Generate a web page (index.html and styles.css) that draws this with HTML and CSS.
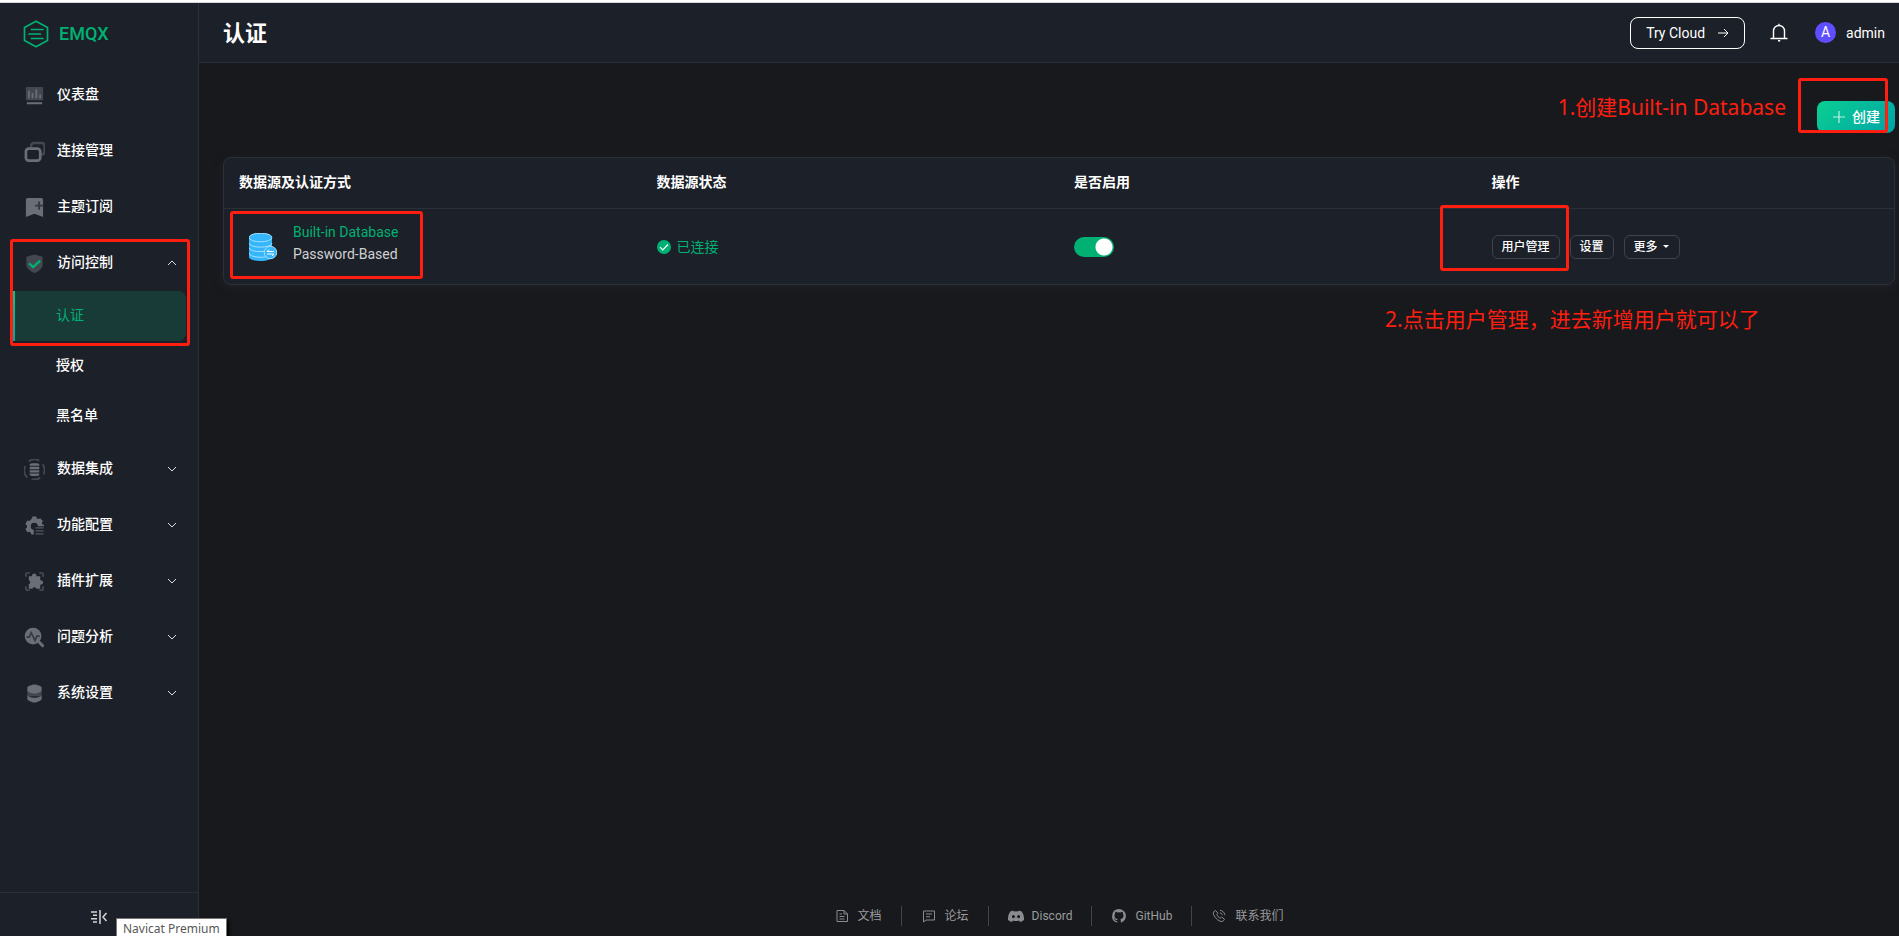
FILE: index.html
```html
<!DOCTYPE html>
<html lang="zh-CN">
<head>
<meta charset="utf-8">
<title>EMQX Dashboard - 认证</title>
<link rel="stylesheet" href="styles.css">
</head>
<body>
<div class="browser-edge"></div>
<div class="app">
  <aside class="sidebar">
    <a class="logo" href="#">
      <svg width="26" height="28" viewBox="0 0 26 28" fill="none" stroke="currentColor" stroke-width="1.7" stroke-linejoin="round"><path d="M13 1.2 24.5 7.4V20.600L13 26.800 1.500 20.600V7.400Z"/><path d="M8.500 9.500H20M6 14H17.500M8.500 18.500H20" stroke-linecap="round"/></svg>
      <span>EMQX</span>
    </a>
    <nav class="menu">
      <a class="item" href="#">
        <svg class="ico" viewBox="0 0 22 22"><path class="dim" d="M3 2h16a1 1 0 0 1 1 1v12a1 1 0 0 1-1 1H3a1 1 0 0 1-1-1V3a1 1 0 0 1 1-1Z"/><path class="lit" d="M4.300 6h1.800v8H4.300zM8 8.500h1.800V14H8zM12 4.500h1.800V14H12zM16 10h1.800v4H16zM3 18h16v2.200H3z"/></svg>
        <span>仪表盘</span></a>
      <a class="item" href="#">
        <svg class="ico" viewBox="0 0 22 22"><rect class="dim-line" x="7.500" y="2" width="14" height="12" rx="3" stroke-width="2.600"/><rect class="lit-line cut" x="2" y="8" width="15" height="12.500" rx="3" stroke-width="2.800"/></svg>
        <span>连接管理</span></a>
      <a class="item" href="#">
        <svg class="ico" viewBox="0 0 22 22"><path class="lit" d="M4 1h14a2 2 0 0 1 2 2v18l-9-3.500L2 21V3a2 2 0 0 1 2-2Z"/><path d="M11.500 9H20M15.800 4.700v8.600" stroke="#343942" stroke-width="2"/></svg>
        <span>主题订阅</span></a>
      <a class="item" href="#">
        <svg class="ico" viewBox="0 0 22 22"><path class="dim" d="M11 1.500 19.500 4v8c0 4.500-4.500 7.300-8.500 9-4-1.700-8.500-4.500-8.500-9V4Z"/><path d="m5.500 10.800 4 4L17 8" fill="none" stroke="#00b173" stroke-width="2.400"/></svg>
        <span>访问控制</span>
        <svg class="arrow" viewBox="0 0 10 10"><path d="m1 7 4-4 4 4"/></svg></a>
      <div class="submenu">
        <a class="sub active" href="#">认证</a>
        <a class="sub" href="#">授权</a>
        <a class="sub" href="#">黑名单</a>
      </div>
      <a class="item" href="#">
        <svg class="ico" viewBox="0 0 22 22"><path class="dim-line" stroke-width="2" d="M3.500 19.500A10 10 0 0 1 1.500 7.500M5 2.500a10 10 0 0 1 11-.8M19.500 5.500A10 10 0 0 1 20.500 16M17 19.500a10 10 0 0 1-9 1.500"/><path class="lit" d="M6 5.500C6 4 16 4 16 5.500V7.200H6zM6 8.200h10v2.500H6zM6 11.700h10v2.500H6zM6 15.200h10v1.500c0 1.500-10 1.500-10 0z"/></svg>
        <span>数据集成</span>
        <svg class="arrow" viewBox="0 0 10 10"><path d="m1 3 4 4 4-4"/></svg></a>
      <a class="item" href="#">
        <svg class="ico" viewBox="0 0 22 22"><path class="lit" d="m8.500 3.500.3-2h4l.7 2.200 1.300.6 2.200-1 2.800 2.900-1.100 2 .5 1.600 1.800.6v1.400h-6.500a3.700 3.700 0 1 0-4.300 3.700V20.500H7.700L7.200 18.500l-1.700-1-2.200.5-1.800-3.500 1.600-1.500v-1.800L1.500 9.500l1.800-3.800 2.400.6Z"/><path class="dim" d="M12 12.700h8.500v1.800H12zM12 15.800h8.500v1.800H12zM12 18.900h8.500v1.800H12z"/></svg>
        <span>功能配置</span>
        <svg class="arrow" viewBox="0 0 10 10"><path d="m1 3 4 4 4-4"/></svg></a>
      <a class="item" href="#">
        <svg class="ico" viewBox="0 0 22 22"><path class="dim-line" stroke-width="2" d="M2 6V4a2 2 0 0 1 2-2h2M16 2h2a2 2 0 0 1 2 2v2M20 16v2a2 2 0 0 1-2 2h-2M6 20H4a2 2 0 0 1-2-2v-2"/><path class="lit" d="M5 5.500h3.500a2.300 2.300 0 1 1 4.400 0H17v4.300a2.300 2.300 0 1 1 0 4.400V18.500h-4a2.200 2.200 0 0 0-4.200 0H5v-4.500a2.200 2.200 0 0 0 0-4.200Z"/></svg>
        <span>插件扩展</span>
        <svg class="arrow" viewBox="0 0 10 10"><path d="m1 3 4 4 4-4"/></svg></a>
      <a class="item" href="#">
        <svg class="ico" viewBox="0 0 22 22"><circle class="lit" cx="9.500" cy="9.500" r="8.800"/><path class="lit-line" stroke-width="3" stroke-linecap="round" d="m15.500 15.500 4 4"/><path d="M2.500 10.500h3l2-4.500 4 8 2-4.500h3" fill="none" stroke="#353a43" stroke-width="1.800"/></svg>
        <span>问题分析</span>
        <svg class="arrow" viewBox="0 0 10 10"><path d="m1 3 4 4 4-4"/></svg></a>
      <a class="item" href="#">
        <svg class="ico" viewBox="0 0 22 22"><path class="dim" d="M3.500 8h15v6h-15z"/><path class="lit" d="M3.500 4.500c0-1 5-3 7.500-3s7.500 2 7.500 3V8c0 1-5 3-7.500 3S3.500 9 3.500 8zM3.500 13c2 1.500 5 2.500 7.500 2.500s5.500-1 7.500-2.500V17c0 1-5 3.500-7.500 3.500S3.500 18 3.500 17z"/></svg>
        <span>系统设置</span>
        <svg class="arrow" viewBox="0 0 10 10"><path d="m1 3 4 4 4-4"/></svg></a>
    </nav>
    <button class="collapse" aria-label="收起菜单">
      <svg width="18" height="14" viewBox="0 0 18 14" fill="none" stroke="#d5d6d8" stroke-width="1.500"><path d="M1 2h6M3 5.300h4M1 8.700h6M3 12h4M10 0v14M16.500 3 13 7l3.500 4"/></svg>
    </button>
  </aside>

  <div class="main">
    <header class="topbar">
      <h1>认证</h1>
      <div class="tools">
        <button class="cloud">Try Cloud
          <svg width="12" height="12" viewBox="0 0 12 12" fill="none" stroke="currentColor"><path d="M1 6h10M7 2l4 4-4 4"/></svg></button>
        <button class="bell" aria-label="通知">
          <svg width="18" height="20" viewBox="0 0 18 20" fill="none" stroke="#fff" stroke-width="1.400"><path d="M3.500 15.500V8a5.500 5.500 0 0 1 11 0v7.500M.5 15.500h17M9 .8v2M8 17.800h2.200"/></svg></button>
        <button class="user"><span class="avatar">A</span>admin</button>
      </div>
    </header>

    <main class="content">
      <div class="actions">
        <button class="create"><svg width="12" height="12" viewBox="0 0 12 12" stroke="#b9f2df" stroke-width="1.200"><path d="M6 0v12M0 6h12"/></svg>创建</button>
      </div>
      <div class="card">
        <table>
          <thead><tr><th>数据源及认证方式</th><th>数据源状态</th><th>是否启用</th><th>操作</th></tr></thead>
          <tbody><tr>
            <td><div class="source">
              <svg width="28" height="28" viewBox="0 0 28 28"><path d="M0 4v20c0 2.200 5 4 11.500 4S23 26.200 23 24V4Z" fill="#35b6fa"/><ellipse cx="11.500" cy="4.300" rx="11.500" ry="4.300" fill="#35b6fa"/><path d="M0 4.300c0 6 23 6 23 0M0 10c0 5.500 23 5.500 23 0M0 14.500c0 5.500 23 5.500 23 0M0 20c0 4.500 15 5 18 3.500M.3 4c1-5 21.500-5 22.400 0" fill="none" stroke="#a5dfff"/><circle cx="21.500" cy="19.500" r="6.200" fill="#35b6fa" stroke="#a5dfff"/><path d="M25 18.500h-7l2-2M18 21h7l-2 2" fill="none" stroke="#fff"/></svg>
              <div class="names"><a href="#">Built-in Database</a><span>Password-Based</span></div>
            </div></td>
            <td><span class="status"><svg width="14" height="14" viewBox="0 0 14 14"><circle cx="7" cy="7" r="7" fill="#00b173"/><path d="m3 7.200 2.800 2.800L11 4.500" fill="none" stroke="#fff" stroke-width="1.200"/></svg>已连接</span></td>
            <td><input class="switch" type="checkbox" role="switch" aria-label="是否启用" checked></td>
            <td><div class="ops"><button>用户管理</button><button>设置</button><button>更多<i class="caret"></i></button></div></td>
          </tr></tbody>
        </table>
      </div>
    </main>

    <footer class="links">
      <a href="#"><svg viewBox="0 0 16 16"><path d="M3 2.500h7l3.500 3.500v7.500H3zM10 2.500V6h3.500M5.500 6H8M5.500 8.500h5M5.500 11h5"/></svg>文档</a>
      <a href="#"><svg viewBox="0 0 16 16"><path d="M2.500 3h11v9H5l-2.500 2zM5 6h6M5 8.800h4"/></svg>论坛</a>
      <a href="#"><svg class="solid" viewBox="0 0 16 16"><path fill-rule="evenodd" d="M5.300 2.500a12 12 0 0 0-3 1C.5 6-.1 8.700 0 12c1.300 1 2.600 1.500 3.900 1.900l1-1.500a9 9 0 0 0 6.200 0l1 1.500c1.400-.4 2.700-1 3.900-1.900.2-3.400-.6-6.200-2.300-8.500a12 12 0 0 0-3-1l-.5 1a11 11 0 0 0-4.500 0ZM5.400 7a1.500 1.600 0 1 1 0 3.200 1.500 1.600 0 0 1 0-3.200Zm5.200 0a1.500 1.600 0 1 1 0 3.200 1.500 1.600 0 0 1 0-3.200Z"/></svg>Discord</a>
      <a href="#"><svg class="solid" viewBox="0 0 16 16"><path d="M8 1a7 7 0 0 0-2.200 13.600c.4 0 .5-.2.500-.4v-1.300c-2 .4-2.400-.9-2.400-.9-.3-.8-.8-1-.8-1-.6-.4 0-.4 0-.4.800 0 1.100.700 1.100.700.6 1.100 1.700.8 2.100.6 0-.4.2-.7.400-.9-1.600-.2-3.200-.8-3.200-3.500 0-.8.300-1.400.7-1.900 0-.2-.3-.9.100-1.800 0 0 .6-.2 1.900.700a6.600 6.600 0 0 1 3.600 0c1.300-.9 1.900-.7 1.900-.7.4.9.100 1.600.100 1.800.4.500.7 1.100.7 1.900 0 2.700-1.600 3.300-3.200 3.500.3.200.5.700.5 1.300v1.900c0 .2.100.4.500.4A7 7 0 0 0 8 1Z"/></svg>GitHub</a>
      <a href="#"><svg viewBox="0 0 16 16"><path d="M4.500 2.500 2.300 4.200c-.3 4.300 5 9.600 9.200 9.300l2-2.200-2.800-2.300-1.500 1.200C7.800 9.800 6.300 8 5.800 6.500L7 5.200ZM9 2.300c2.500.1 4.700 2.300 4.800 4.800M9 4.800c1.200.1 2.200 1.100 2.300 2.300"/></svg>联系我们</a>
    </footer>
  </div>
</div>

<div class="mark mark-menu"></div>
<div class="mark mark-source"></div>
<div class="mark mark-users"></div>
<div class="mark mark-create"></div>
<p class="note note-create">1.创建Built-in Database</p>
<p class="note note-users">2.点击用户管理，进去新增用户就可以了</p>
<div class="tooltip" role="tooltip">Navicat Premium</div>
</body>
</html>
```

FILE: styles.css
```css
* { box-sizing: border-box; }

body {
  margin: 0;
  height: 100vh;
  overflow: hidden;
  position: relative;
  display: flex;
  flex-direction: column;
  background: #18191c;
  color: #fff;
  font: 14px/22px Roboto, "Noto Sans CJK SC", sans-serif;
}

a { color: inherit; text-decoration: none; }
button { font: inherit; color: inherit; background: none; border: 0; padding: 0; cursor: pointer; }
svg { flex: none; display: block; }

.browser-edge { height: 3px; flex: none; background: #fff; border-bottom: 1px solid #d5d7dc; }
.app { flex: 1; min-height: 0; display: flex; }

/* Sidebar */
.sidebar {
  width: 199px;
  flex: none;
  display: flex;
  flex-direction: column;
  background: #1c2028;
  border-right: 1px solid #2b3038;
}
.logo {
  height: 60px;
  padding: 2px 0 0 23px;
  display: flex;
  align-items: center;
  gap: 10px;
  color: #00b173;
  font-size: 18px;
  font-weight: 500;
}
.menu { flex: 1; padding: 4px 12px 0; }
.item { height: 56px; display: flex; align-items: center; gap: 12px; padding: 0 9px 0 12px; font-weight: 500; }
.item span { padding-bottom: 2px; }
.ico { width: 21px; height: 21px; }
.dim { fill: #434750; }
.lit { fill: #6a6e77; }
.dim-line { fill: none; stroke: #434750; }
.lit-line { fill: none; stroke: #6a6e77; }
.cut { fill: #1c2028; }
.arrow { width: 10px; height: 10px; margin-left: auto; fill: none; stroke: #dcdddf; }
.sub { height: 50px; display: flex; align-items: center; padding: 0 0 2px 44px; font-weight: 500; }
.active {
  color: #00b173;
  font-weight: 400;
  background: linear-gradient(#00c78f, #00a7a0) left / 3px 100% no-repeat #183b37;
  border-radius: 0 8px 8px 0;
}
.collapse { height: 44px; display: flex; justify-content: center; padding-top: 17px; border-top: 1px solid #2b3038; }

/* Header */
.main { flex: 1; min-width: 0; display: flex; flex-direction: column; }
.topbar {
  height: 60px;
  flex: none;
  display: flex;
  align-items: center;
  justify-content: space-between;
  padding: 0 14px 0 24px;
  background: #1c2028;
  border-bottom: 1px solid #2b3038;
}
h1 { margin: 0; padding-top: 2px; font-size: 22px; line-height: 32px; font-weight: 700; }
.tools { display: flex; align-items: center; }
.cloud { height: 32px; display: flex; align-items: center; gap: 12px; padding: 0 15px; border: 1px solid #fff; border-radius: 8px; }
.bell { width: 18px; margin: 0 27px 0 25px; }
.user { display: flex; align-items: center; gap: 10px; }
.avatar { width: 21px; height: 21px; border-radius: 50%; background: #5e4eff; line-height: 21px; text-align: center; }

/* Authentication list */
.content { flex: 1; padding: 38px 4px 0 24px; }
.actions { display: flex; justify-content: flex-end; margin-bottom: 24px; }
.create {
  height: 32px;
  display: flex;
  align-items: center;
  gap: 7px;
  padding: 0 15px 0 16px;
  border-radius: 8px;
  background: linear-gradient(135deg, #0bcf91, #00a3a8);
  font-weight: 500;
}
.card { border: 1px solid #2b3038; border-radius: 8px; background: #1c2028; box-shadow: 0 2px 8px #20232b; }
table { width: 100%; table-layout: fixed; border-collapse: separate; border-spacing: 0; }
th { height: 51px; padding: 0 15px 2px; text-align: left; font-weight: 700; border-bottom: 1px solid #2b3038; }
td { height: 75px; padding: 0 15px; }
.source { display: flex; align-items: center; gap: 16px; padding-left: 10px; }
.names { display: flex; flex-direction: column; color: #d0d1d3; padding-bottom: 8px; }
.names a, .status { color: #00b173; }
.status { display: flex; align-items: center; gap: 6px; }
.switch {
  appearance: none;
  display: block;
  width: 40px;
  height: 20px;
  margin: 0;
  border-radius: 10px;
  background: radial-gradient(circle at 30px 50%, #fff 8px, #00b173 9px);
}
.ops { display: flex; gap: 10px; }
.ops button {
  height: 24px;
  display: flex;
  align-items: center;
  gap: 5px;
  padding: 0 9px;
  border: 1px solid #3f434b;
  border-radius: 6px;
  font-size: 12px;
  font-weight: 500;
}
.caret { border: 3px solid transparent; border-top-color: #fff; border-bottom: 0; margin-right: 1px; }

/* Footer */
.links { display: flex; justify-content: center; padding: 0 0 10px 19px; color: #9a9b9e; font-size: 12px; line-height: 20px; }
.links a { display: flex; align-items: center; gap: 8px; padding: 0 19px; }
.links a + a { border-left: 1px solid #41444a; }
.links svg { width: 16px; height: 16px; fill: none; stroke: #8b8c90; }
.links .solid { fill: #8b8c90; stroke: none; }

/* Annotations over the page */
.mark { position: absolute; border: 3px solid #ff1e10; border-radius: 3px; pointer-events: none; }
.mark-menu { left: 10px; top: 239px; width: 180px; height: 107px; }
.mark-source { left: 230px; top: 211px; width: 193px; height: 68px; }
.mark-users { right: 330px; top: 205px; width: 129px; height: 66px; }
.mark-create { right: 11px; top: 78px; width: 90px; height: 55px; }
.note { position: absolute; margin: 0; color: #ff1e10; font: 21px/28px "Noto Sans", "Noto Sans CJK SC", sans-serif; white-space: nowrap; }
.note-create { right: 113px; top: 93px; }
.note-users { left: 1385px; top: 305px; }
.tooltip {
  position: absolute;
  left: 116px;
  top: 918px;
  height: 20px;
  padding: 0 6px;
  background: #fff;
  border: 1px solid #767676;
  color: #575757;
  font: 12px/20px "Noto Sans", sans-serif;
  box-shadow: 2px 2px 3px #000;
  white-space: nowrap;
}
```
